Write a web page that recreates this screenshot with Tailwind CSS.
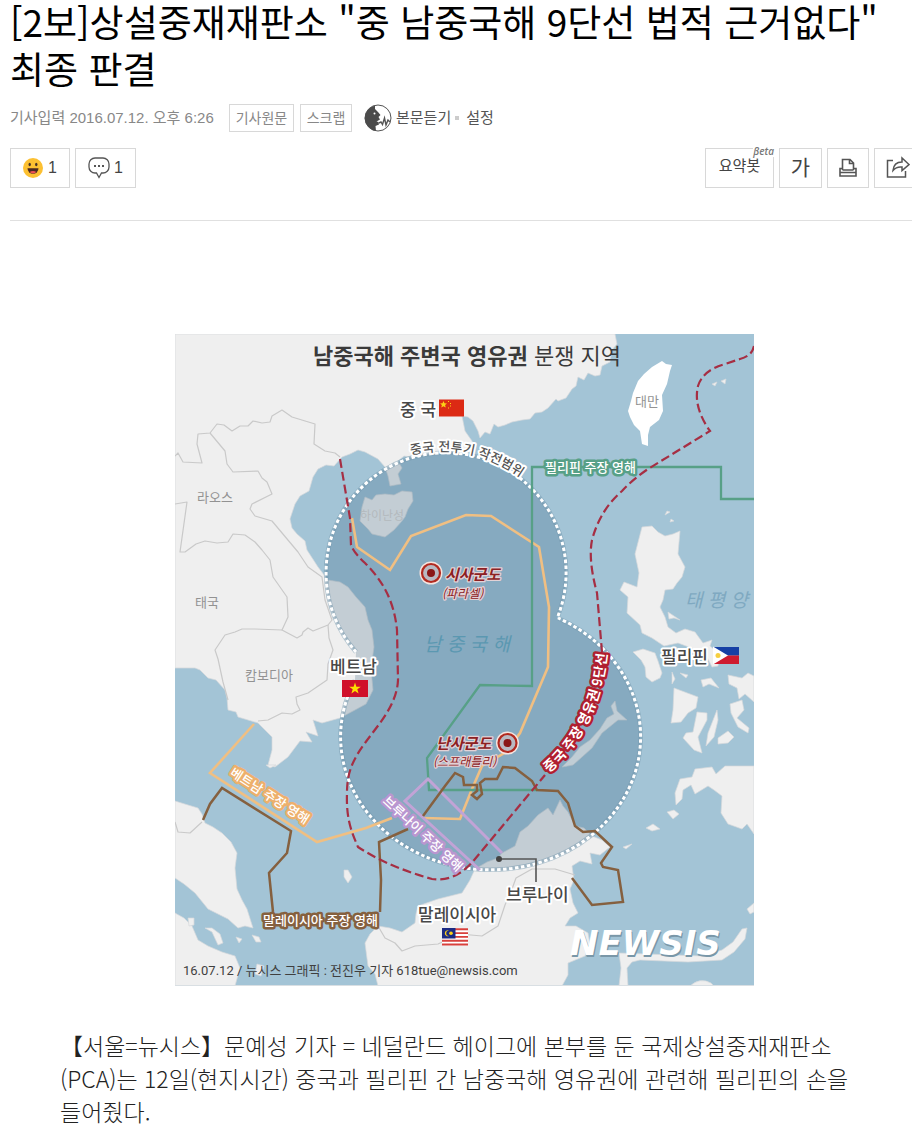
<!DOCTYPE html>
<html lang="ko">
<head>
<meta charset="utf-8">
<meta name="viewport" content="width=device-width, initial-scale=1">
<title>[2보]상설중재재판소 "중 남중국해 9단선 법적 근거없다" 최종 판결</title>
<script src="https://cdn.jsdelivr.net/npm/@tailwindcss/browser@4"></script>
</head>
<body class="bg-white text-black font-['Liberation_Sans','Noto_Sans_CJK_KR',sans-serif]">
<main class="overflow-hidden">
<header class="ml-[10px] border-b border-[#e0e0e0] pb-8">
  <h1 class="-mt-[2px] font-['Noto_Sans_CJK_KR',sans-serif] text-[37px] leading-[47px]">[2보]상설중재재판소 "중 남중국해 9단선 법적 근거없다"<br>최종 판결</h1>
  <div class="mt-3 flex h-7 items-center text-[15px] text-[#888]">
    <p class="w-[219px] whitespace-nowrap">기사입력 <time datetime="2016-07-12T18:26">2016.07.12. 오후 6:26</time></p>
    <a href="#" class="flex h-7 w-[65px] items-center justify-center border border-[#d8d8d8] text-sm">기사원문</a>
    <button type="button" class="ml-[6px] flex h-7 w-[52px] items-center justify-center border border-[#d8d8d8] text-sm">스크랩</button>
    <button type="button" class="ml-3 flex items-center gap-1 text-[#555]">
      <svg class="size-7" viewBox="0 0 28 28" aria-hidden="true">
        <circle cx="14" cy="14" r="13" fill="#fff" stroke="#555" stroke-width="1"/>
        <path fill="#4b4b4b" d="M11 1.400A13 13 0 0 0 12 27L11.500 22L15 20.500L14.500 18L12.500 17.500L16 15.500L14.500 13L16.500 11L14 8L11 5Z"/>
        <circle cx="10.500" cy="9.500" r="1" fill="#fff"/>
        <path d="M15 19l2-1 1.500 2.500L20.500 14l1.500 7 2-5 2 2" fill="none" stroke="#555" stroke-width="1.400"/>
      </svg>
      <span>본문듣기</span>
    </button>
    <span class="mx-1 size-1 bg-[#ccc]"></span>
    <button type="button" class="ml-[3px] text-[#555]">설정</button>
  </div>
  <div class="mt-4 flex h-10 justify-between text-base text-[#444]">
    <div class="flex gap-[5px]">
      <button type="button" class="flex w-[60px] items-center justify-center gap-[5px] border border-[#d8d8d8]">
        <svg class="size-5" viewBox="0 0 20 20" aria-hidden="true"><circle cx="10" cy="10" r="10" fill="#fcc032"/><ellipse cx="6.700" cy="6.500" rx="1.200" ry="1.700" fill="#4a3428"/><ellipse cx="13.300" cy="6.500" rx="1.200" ry="1.700" fill="#4a3428"/><path d="M4.500 10.300h11a5.500 5.500 0 0 1-11 0z" fill="#4a2820"/><path d="M6.500 14a5 3 0 0 1 7 0 5 5 0 0 1-7 0z" fill="#f05252"/></svg>
        <span>1</span>
      </button>
      <button type="button" class="flex w-[61px] items-center justify-center gap-1 border border-[#d8d8d8]">
        <svg class="size-[22px]" viewBox="0 0 22 22" aria-hidden="true"><path d="M7 1h8a6 6 0 0 1 6 6v3a6 6 0 0 1-6 6h-1.500L11 20.500 8.500 16H7a6 6 0 0 1-6-6V7a6 6 0 0 1 6-6z" fill="none" stroke="#555" stroke-width="1.300"/><path d="M6 8h2v2H6zM10 8h2v2h-2zM14 8h2v2h-2z" fill="#555"/></svg>
        <span>1</span>
      </button>
    </div>
    <div class="-mr-[5px] flex gap-[5px]">
      <button type="button" class="relative w-[69px] border border-[#d8d8d8] pb-[3px] text-[15px]">요약봇<span class="absolute -top-[4px] -right-px bg-white font-['Open_Sans',sans-serif] text-[10px] leading-3 font-semibold text-[#777] italic">βeta</span></button>
      <button type="button" class="w-[43px] border border-[#d8d8d8] text-[21px] text-[#444]">가</button>
      <button type="button" aria-label="인쇄" class="flex w-[42px] items-center justify-center border border-[#d8d8d8]">
        <svg class="h-5 w-[18px]" viewBox="0 0 18 20" fill="none" stroke="#555" stroke-width="1.600" aria-hidden="true"><path d="M3.500 12V1.500h7.500L14.500 5v7M10.500 1.500V5.500h4M3.500 10.500H1v7.500h16v-7.500h-2.500M1 14.500h16M3.500 12h11"/></svg>
      </button>
      <button type="button" aria-label="공유" class="flex w-[43px] items-center justify-center border border-[#d8d8d8] pl-[5px]">
        <svg class="size-6" viewBox="0 0 24 24" fill="none" stroke="#555" stroke-width="1.500" aria-hidden="true"><path d="M7 4.500H1.500v16.500h18v-6"/><path d="M7 14.500C7.500 8.500 11 6 16 6V2l7 6.500-7 6V11C12 10.500 9.500 11.500 7 14.500z"/></svg>
      </button>
    </div>
  </div>
</header>

<article class="pt-[113px] pr-[43px] pl-[60px]">
<figure class="flex justify-center">
<svg class="h-auto w-[579px] max-w-full font-['Noto_Sans_CJK_KR',sans-serif]" viewBox="175 334 579 652" role="img" aria-label="남중국해 주변국 영유권 분쟁 지역 지도">
  <rect x="175" y="334" width="579" height="652" fill="#a3c4d6"/>
  <!-- land -->
  <g fill="#efefef" stroke="#d5d9db" stroke-width=".7" stroke-linejoin="round">
    <path d="M175 334H615L617 344 612 350 610 362 602 366 600 375 595 376 588 373 584 380 578 377 576 386 572 389 566 398 558 401 556 399 548 408 542 412 535 413 530 419 522 420 512 422 505 425 498 427 494 424 490 434 485 432 480 438 478 431 473 421 468 417 462 416 465 431 472 441 474 446 450 452 412 457 404 456 398 461 402 468 398 474 401 484 390 486 388 476 385 467 378 459 365 452 358 450 350 454 342 457 334 466 326 465 318 469 313 477 309 491 300 496 295 504 290 519 292 528 297 534 305 541 307 550 318 567 328 580 340 582 348 587 356 597 365 607 368 620 372 630 374 647 371 668 373 690 366 704 355 710 340 718 322 723 313 720 318 736 306 732 312 742 300 741 288 757 275 767 268 765 272 750 272 737 258 723 248 720 238 717 236 712 228 710 227 698 225 690 216 680 208 678 200 670 195 668 175 668Z"/>
    <path d="M175 801L188 805 198 808 202 814 205 823 213 827 222 833 231 842 237 853 235 868 237 889 242 900 247 909 253 928 245 926 238 928 228 919 208 909 195 893 184 884 175 878Z"/>
    <path d="M175 913L184 918 192 926 198 940 208 946 222 952 235 956 240 968 235 986H175Z"/>
    <path d="M205 928L212 932 218 945 223 943 220 934 212 928Z"/>
    <path d="M378 926L390 928 402 932 415 923 416 914 418 906 438 899 462 893 470 880 475 869 487 862 498 858 502 853 515 846 520 832 528 826 538 815 548 808 553 815 560 800 563 806 568 812 575 826 584 828 592 836 602 840 610 847 600 855 590 853 592 864 580 861 572 866 574 880 570 889 573 903 578 913 570 918 565 926 576 926 588 933 590 945 585 956 568 963 568 975 562 986H378L375 974 368 966 365 943 370 934Z"/>
    <path d="M619 953L702 956 722 950 733 942 742 929 747 928 745 939 734 952 722 960 688 962 640 960 632 962 627 968 628 986H619L621 968Z"/>
    <path d="M690 986Q700 977 711 983L714 986ZM754 766H725L716 774 712 767 695 769 692 777 680 779 675 793 676 805 682 799 683 790 691 785 695 794 708 786 714 790 722 796 721 813 728 824 742 829 747 824 754 834Z"/>
    <path d="M635 554L642 527 652 526 658 532 665 536 673 534 680 531 678 554 685 567 682 577 677 583 673 589 665 590 663 600 660 607 665 617 668 627 676 633 685 629 695 632 703 643 712 640 710 646 720 654 718 666 712 667 706 655 698 650 686 646 678 643 664 646 652 638 642 633 640 625 627 613 628 597 620 590 624 582 637 587 639 573Z"/>
    <path d="M633 652L643 649 655 653 658 661 662 673 660 678 652 682 646 677 645 667 641 660ZM674 688L682 691 698 697 696 708 688 713 681 722 671 723 673 710ZM697 712L707 713 707 720 698 737 702 753 694 750 683 738 686 733 693 732ZM717 710L718 720 714 737 706 746 708 733ZM730 704L742 700 744 710 737 718 749 728 748 733 738 727 731 713ZM728 675L742 678 748 673 754 676V702L745 694 739 699 737 688 729 684ZM701 680L711 678 719 688 709 684 703 687ZM718 738L728 731 734 737 728 743 718 744ZM680 673L688 675 686 678ZM672 672L675 679 672 684ZM668 612L674 616 680 620 674 618 669 619Z"/>
    <path d="M562 767L572 757 580 747 590 740 600 729 607 718 614 714 611 706 615 701 617 711 627 720 618 720 602 733 592 748 582 757 573 765Z" fill="#eceff0"/>
    <path d="M365 497L372 500 376 495 385 494 394 495 402 491 412 492 413 501 408 509 405 517 402 521 394 530 385 537 372 534 368 529 360 521 362 507Z"/>
    <path d="M667 812L674 810 679 814 673 819ZM646 828L653 824 660 829 652 831ZM623 847L632 844 626 849ZM712 384L717 382 715 386ZM721 381L726 379 725 384ZM344 870L348 870 352 877 348 883 344 877ZM188 918L194 918 194 925 189 926ZM236 937L242 939 239 943ZM252 935L259 937 261 942 256 942ZM257 964L264 966 261 976 255 974ZM266 765L276 765 270 768ZM747 909L754 903 754 912 750 914ZM665 515L670 512 667 511ZM671 519L674 521 670 522Z"/>
  </g>
  <path d="M662 361L666 364 672 365 670 371 667 384 662 395 663 411 659 420 650 427 648 435 648 446 642 444 640 431 634 425 630 417 628 411 631 401 633 393 638 381 644 374 652 367Z" fill="#fff"/>
  <!-- land borders -->
  <g fill="none" stroke="#c9c9c9" stroke-width="1.200" stroke-linejoin="round">
    <path d="M175 456L178 453 183 462 202 463 197 444 198 434 210 433 217 424 224 425 232 431 240 426 248 426 253 421 262 423 270 422 272 416 282 410 292 417 315 424 314 444 325 451 335 453 340 457"/>
    <path d="M210 433L225 451 227 464 233 472 258 471 262 478 267 482 272 494 252 504 250 509 255 516 272 521 298 552 308 567 322 577 325 600 332 620 328 625 313 631 308 628 303 632 302 635 297 638 282 630 288 617 287 597 273 577 270 560 262 550 255 542 245 535 233 534 228 542 217 543 205 541 196 544 185 552 180 552 187 502 175 504"/>
    <path d="M282 630L255 629 242 629 235 632 225 635 219 644 215 650 218 659 223 682 228 700M328 625L329 638 333 650 328 664 327 680 308 693 296 697 297 704 300 710 292 714 282 713 268 720 258 721M175 822L178 832 190 833 202 822M378 926L385 938 395 943 402 951 415 946 438 944 460 934 482 936 498 926 505 905 512 889 516 878 532 869 555 869 575 875"/>
  </g>
  <!-- fighter range -->
  <path d="M557 618A120 120 0 1 0 356 652L355 680A150 133 0 1 0 557 619Z" fill="#144768" fill-opacity=".2"/>
  <g fill="none" stroke="#7397ad" stroke-width="4.500"><path d="M558 616A120 120 0 1 0 356 652M355 680A150 133 0 1 0 558 618" stroke-opacity=".5"/></g>
  <g fill="none" stroke="#fff" stroke-width="3" stroke-dasharray="3.500 2.500"><path d="M558 616A120 120 0 1 0 356 652M355 680A150 133 0 1 0 558 618"/></g>
  <!-- claimed waters -->
  <g fill="none" stroke-linejoin="miter">
    <path d="M352 518L357 547 390 570 411 536 466 515 491 516 539 547 549 607 548 667 520 733 506 752 482 766 472 789 460 819 423 818M392 818L366 828 317 842 210 773 254 724" stroke="#f0bf82" stroke-width="2.600"/>
    <path d="M754 499H721V467H532V686L480 685 427 758 429 790H537" stroke="#57a087" stroke-width="2.300"/>
    <path d="M502 853L428 779 405 801 480 870" stroke="#c2a3d6" stroke-width="3"/>
    <path d="M203 820L210 804 222 788 291 831 287 853 269 873 273 912M380 912L381 880 379 842 408 829M423 816L445 786 455 773 463 777 464 785 477 785 477 791 472 795 477 799 482 794 480 783 485 779 497 779 503 767 515 768 532 781 537 790 558 791 568 803 575 826 583 832 595 831 612 847 601 863 603 867 618 870 623 902 592 905 572 878" stroke="#85603f" stroke-width="2.500"/>
    <path d="M340 459L350 518 351 545Q354 553 365 563C382 580 394 600 397 630L398 680C397 705 378 725 365 743 351 762 347 775 347 793 346 820 352 833 358 847 375 858 394 868 432 879 452 882 466 870 475 859L545 775M602 652L597 593Q588 560 592 540 600 510 622 491 632 480 648 469L710 431Q693 407 698 386 703 370 725 364L740 359Q752 356 754 346" stroke="#a62e43" stroke-width="2.200" stroke-dasharray="9 4"/>
  </g>
  <!-- place names -->
  <text x="313" y="364" font-size="22" fill="#3a3a3a"><tspan font-weight="700">남중국해 주변국 영유권</tspan> 분쟁 지역</text>
  <g fill="#929292" font-size="13">
    <text x="197" y="502">라오스</text><text x="195" y="607">태국</text><text x="245" y="680">캄보디아</text><text x="635" y="406">대만</text><text x="360" y="520" font-size="12" fill="#b3b9bd">하이난성</text>
  </g>
  <g fill="#5b98b1" font-size="19" font-style="italic"><text x="424" y="651">남 중 국 해</text><text x="685" y="607" fill="#7fa9c1">태 평 양</text></g>
  <path d="M498 859H536V882" fill="none" stroke="#555" stroke-width="1.600"/><circle cx="499" cy="859" r="3" fill="#444"/>
  <g fill="#484848" stroke="#fff" stroke-width="4" stroke-linejoin="round" paint-order="stroke" font-size="17" font-weight="500">
    <text x="400" y="416">중 국</text><text x="330" y="673">베트남</text><text x="661" y="663">필리핀</text><text x="418" y="921">말레이시아</text><text x="506" y="901">브루나이</text>
  </g>
  <path id="range" d="M411 455Q472 441 525 481" fill="none"/>
  <path id="nine" d="M549 773Q602 727 608 645" fill="none"/>
  <text font-size="13" fill="#555" stroke="#fff" stroke-width="4" stroke-linejoin="round" paint-order="stroke" font-weight="500"><textPath href="#range">중국 전투기 작전범위</textPath></text>
  <g fill="#fff" stroke-linejoin="round" paint-order="stroke" stroke-width="5" font-size="13" font-weight="500">
    <text x="545" y="472" stroke="#57a087">필리핀 주장 영해</text>
    <text x="263" y="925" stroke="#85603f">말레이시아 주장 영해</text>
    <text transform="translate(229 775) rotate(33)" stroke="#edb06c">베트남 주장 영해</text>
    <text transform="translate(382 802) rotate(43)" stroke="#b996d0">브루나이 주장 영해</text>
    <text font-size="14" font-weight="700" stroke="#b01f30"><textPath href="#nine">중국 주장 영유권 9단선</textPath></text>
  </g>
  <g fill="#8c2023" stroke="#e3d2d6" stroke-width="2.500" stroke-linejoin="round" paint-order="stroke" font-style="italic">
    <g font-size="15" font-weight="700"><text x="445" y="580">시사군도</text><text x="436" y="749">난사군도</text></g>
    <g font-size="12"><text x="442" y="598">(파라셀)</text><text x="433" y="766">(스프래틀리)</text></g>
  </g>
  <g stroke="#b22a20" stroke-width="2.200" fill="#f6e4df"><circle cx="431" cy="573" r="11.500" stroke="none"/><circle cx="431" cy="573" r="9" fill="#b9b9c2"/><circle cx="431" cy="573" r="4" fill="#8a1717" stroke="none"/><circle cx="507.500" cy="743" r="11.500" stroke="none"/><circle cx="507.500" cy="743" r="9" fill="#b9b9c2"/><circle cx="507.500" cy="743" r="4" fill="#8a1717" stroke="none"/></g>
  <!-- flags -->
  <path fill="#dc2a14" d="M439 399.500h25v17h-25z"/><path fill="#fcd116" d="M443.500 401l1 2.300 2.500.2-1.900 1.600.6 2.400-2.200-1.300-2.200 1.300.6-2.400-1.900-1.600 2.500-.2zM448 401h1v1h-1zM450 403h1v1h-1zM450 405.500h1v1h-1zM448 407.500h1v1h-1z"/>
  <path fill="#d0102a" d="M342 680h26v17h-26z"/><path fill="#fde000" d="M355 682.500l1.400 4.200h4.400l-3.500 2.600 1.300 4.200-3.600-2.600-3.600 2.600 1.300-4.200-3.500-2.600h4.400z"/>
  <path fill="#1640a5" d="M713 647h26v8.500h-26z"/><path fill="#ce1b2f" d="M713 655.500h26v8.500h-26z"/><path fill="#fff" d="M713 646.500l15 9-15 9z"/><circle cx="718" cy="655.500" r="2.500" fill="#f6cf3f"/>
  <path fill="#fff" d="M442 928h26v17.500h-26z"/><path d="M442 929.300h26M442 933.100h26M442 936.900h26M442 940.700h26M442 944.500h26" stroke="#d8403c" stroke-width="1.900"/><path fill="#1b2a83" d="M442 928h13.500v10.500H442z"/><path d="M449 930.500a3 3 0 1 0 0 5.500 2.700 2.700 0 1 1 0-5.500z" fill="#fcd116"/><circle cx="451" cy="933.200" r="1.800" fill="#fcd116"/>
  <!-- credit -->
  <g style="font-family:'DejaVu Sans',sans-serif" font-weight="700" font-style="italic" font-size="34">
    <text x="571" y="957" fill="#7997a8">NEWSIS</text>
    <text x="570" y="955" fill="#fff">NEWSIS</text>
  </g>
  <text x="183" y="975" style="font-family:Roboto,'Noto Sans CJK KR',sans-serif" font-size="13" fill="#3f3f3f">16.07.12 / 뉴시스 그래픽 : 전진우 기자 618tue@newsis.com</text>
  <path d="M175 985.500H754" stroke="#d9dfe3"/>
</svg>
</figure>
<p class="-mr-6 mt-[43px] pb-1 font-['Noto_Sans_CJK_KR',sans-serif] text-[23px] leading-[33px] font-light text-[#222]">【서울=뉴시스】문예성 기자 = 네덜란드 헤이그에 본부를 둔 국제상설중재재판소<br>(PCA)는 12일(현지시간) 중국과 필리핀 간 남중국해 영유권에 관련해 필리핀의 손을<br>들어줬다.</p>
</article>
</main>
</body>
</html>
